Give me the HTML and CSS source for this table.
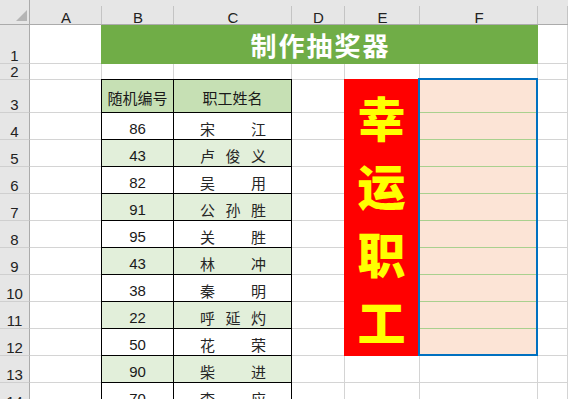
FILE: index.html
```html
<!DOCTYPE html>
<html lang="zh-CN">
<head>
<meta charset="utf-8">
<title>制作抽奖器</title>
<link rel="stylesheet" href="styles.css">
</head>
<body>
<div class="sheet">
  <!-- column headers -->
  <div class="corner"><span class="tri"></span></div>
  <div class="ch">A</div>
  <div class="ch">B</div>
  <div class="ch">C</div>
  <div class="ch">D</div>
  <div class="ch">E</div>
  <div class="ch">F</div>
  <div class="ch"></div>

  <!-- row 1 -->
  <div class="rh">1</div>
  <div class="c"></div>
  <div class="c"></div>

  <!-- row 2 -->
  <div class="rh">2</div>
  <div class="c"></div><div class="c"></div><div class="c"></div><div class="c"></div><div class="c"></div><div class="c"></div><div class="c"></div>

  <!-- rows 3-12 -->
  <div class="rh">3</div><div class="c"></div><div class="c"></div><div class="c"></div>
  <div class="rh">4</div><div class="c"></div><div class="c"></div><div class="c"></div>
  <div class="rh">5</div><div class="c"></div><div class="c"></div><div class="c"></div>
  <div class="rh">6</div><div class="c"></div><div class="c"></div><div class="c"></div>
  <div class="rh">7</div><div class="c"></div><div class="c"></div><div class="c"></div>
  <div class="rh">8</div><div class="c"></div><div class="c"></div><div class="c"></div>
  <div class="rh">9</div><div class="c"></div><div class="c"></div><div class="c"></div>
  <div class="rh">10</div><div class="c"></div><div class="c"></div><div class="c"></div>
  <div class="rh">11</div><div class="c"></div><div class="c"></div><div class="c"></div>
  <div class="rh">12</div><div class="c"></div><div class="c"></div><div class="c"></div>

  <!-- rows 13-14 -->
  <div class="rh">13</div><div class="c"></div><div class="c"></div><div class="c"></div><div class="c"></div><div class="c"></div>
  <div class="rh">14</div><div class="c"></div><div class="c"></div><div class="c"></div><div class="c"></div><div class="c"></div>

  <!-- merged / formatted areas -->
  <div class="title">制作抽奖器</div>

  <div class="table">
    <div class="tc head">随机编号</div>
    <div class="tc head">职工姓名</div>

    <div class="tc num">86</div>
    <div class="tc name"><span>宋</span><span>江</span></div>

    <div class="tc num alt">43</div>
    <div class="tc name alt"><span>卢</span><span>俊</span><span>义</span></div>

    <div class="tc num">82</div>
    <div class="tc name"><span>吴</span><span>用</span></div>

    <div class="tc num alt">91</div>
    <div class="tc name alt"><span>公</span><span>孙</span><span>胜</span></div>

    <div class="tc num">95</div>
    <div class="tc name"><span>关</span><span>胜</span></div>

    <div class="tc num alt">43</div>
    <div class="tc name alt"><span>林</span><span>冲</span></div>

    <div class="tc num">38</div>
    <div class="tc name"><span>秦</span><span>明</span></div>

    <div class="tc num alt">22</div>
    <div class="tc name alt"><span>呼</span><span>延</span><span>灼</span></div>

    <div class="tc num">50</div>
    <div class="tc name"><span>花</span><span>荣</span></div>

    <div class="tc num alt">90</div>
    <div class="tc name alt"><span>柴</span><span>进</span></div>

    <div class="tc num">70</div>
    <div class="tc name"><span>李</span><span>应</span></div>
  </div>

  <div class="lucky">
    <span>幸</span><span>运</span><span>职</span><span>工</span>
  </div>

  <div class="result">
    <div class="rc first"></div>
    <div class="rc"></div>
    <div class="rc"></div>
    <div class="rc"></div>
    <div class="rc"></div>
    <div class="rc"></div>
    <div class="rc"></div>
    <div class="rc"></div>
    <div class="rc"></div>
    <div class="rc"></div>
  </div>
</div>
</body>
</html>
```

FILE: styles.css
```css
* {
  box-sizing: border-box;
}

html, body {
  margin: 0;
  padding: 0;
  background: #ffffff;
  overflow: hidden;
}

body {
  width: 568px;
  height: 399px;
  font-family: "Liberation Sans", "Noto Sans CJK SC", sans-serif;
  font-size: 15px;
  color: #1a1a1a;
}

.sheet {
  display: grid;
  grid-template-columns: 30px 72px 72px 118px 53px 75px 118px 30px;
  grid-template-rows: 25px 39px 16px 33px repeat(11, 27px);
}

/* plain cells */
.c {
  border-right: 1px solid #d4d4d4;
  border-bottom: 1px solid #d4d4d4;
}

/* column headers */
.corner {
  background: #e6e6e6;
  border-right: 1px solid #ababab;
  border-bottom: 1px solid #ababab;
  display: flex;
  align-items: flex-end;
  justify-content: flex-end;
  padding: 0 2px 3px 0;
}

.tri {
  width: 0;
  height: 0;
  border-left: 11px solid transparent;
  border-bottom: 11px solid #b5b5b5;
}

.ch {
  background-color: #e6e6e6;
  background-image: linear-gradient(#c4c4c4, #c4c4c4);
  background-repeat: no-repeat;
  background-position: right bottom;
  background-size: 1px 18px;
  border-bottom: 1px solid #ababab;
  display: flex;
  align-items: flex-end;
  justify-content: center;
  line-height: 13px;
  color: #222222;
}

/* row headers */
.rh {
  background: #e6e6e6;
  border-right: 1px solid #ababab;
  border-bottom: 1px solid #cfcfcf;
  display: flex;
  align-items: flex-end;
  justify-content: center;
  line-height: 15px;
  color: #222222;
}

/* title B1:F1 */
.title {
  grid-column: 3 / 8;
  grid-row: 2 / 3;
  margin-left: -1px;
  background: #70ad47;
  color: #ffffff;
  font-family: "Noto Sans CJK SC", sans-serif;
  font-weight: 700;
  font-size: 26px;
  letter-spacing: 2px;
  display: flex;
  align-items: center;
  justify-content: center;
  padding-left: 2px;
}

/* data table B3:C14 */
.table {
  grid-column: 3 / 5;
  grid-row: 4 / 16;
  margin: -1px 0 0 -1px;
  border-left: 1px solid #000000;
  border-top: 1px solid #000000;
  display: grid;
  grid-template-columns: 72px 118px;
  grid-template-rows: 33px repeat(11, 27px);
  background: #ffffff;
}

.tc {
  border-right: 1px solid #000000;
  border-bottom: 1px solid #000000;
  display: flex;
  align-items: center;
  line-height: 15px;
  padding-top: 4px;
}

.tc.head {
  background: #c6e0b4;
  justify-content: center;
  padding-top: 2px;
  font-family: "Noto Sans CJK SC", sans-serif;
}

.tc.alt {
  background: #e2efda;
}

.tc.num {
  justify-content: center;
}

.tc.name {
  justify-content: space-between;
  padding-left: 26px;
  padding-right: 25px;
  font-family: "Noto Sans CJK SC", sans-serif;
  color: #262626;
}

/* lucky label E3:E12 */
.lucky {
  grid-column: 6 / 7;
  grid-row: 4 / 14;
  margin: -1px 0 0 -1px;
  background: #ff0000;
  color: #ffff00;
  font-family: "Noto Sans CJK SC", sans-serif;
  font-weight: 900;
  font-size: 48px;
  line-height: 68px;
  display: flex;
  flex-direction: column;
  align-items: center;
  justify-content: center;
  padding-right: 1px;
}

/* result area F3:F12 */
.result {
  grid-column: 7 / 8;
  grid-row: 4 / 14;
  position: relative;
  display: grid;
  grid-template-rows: 33px repeat(9, 27px);
  background: #fce4d6;
}

.result::after {
  content: "";
  position: absolute;
  left: -2px;
  top: -2px;
  right: 0;
  bottom: 0;
  border: 2px solid #0070c0;
}

.rc {
  border-bottom: 1px solid #a9d08e;
}
```
